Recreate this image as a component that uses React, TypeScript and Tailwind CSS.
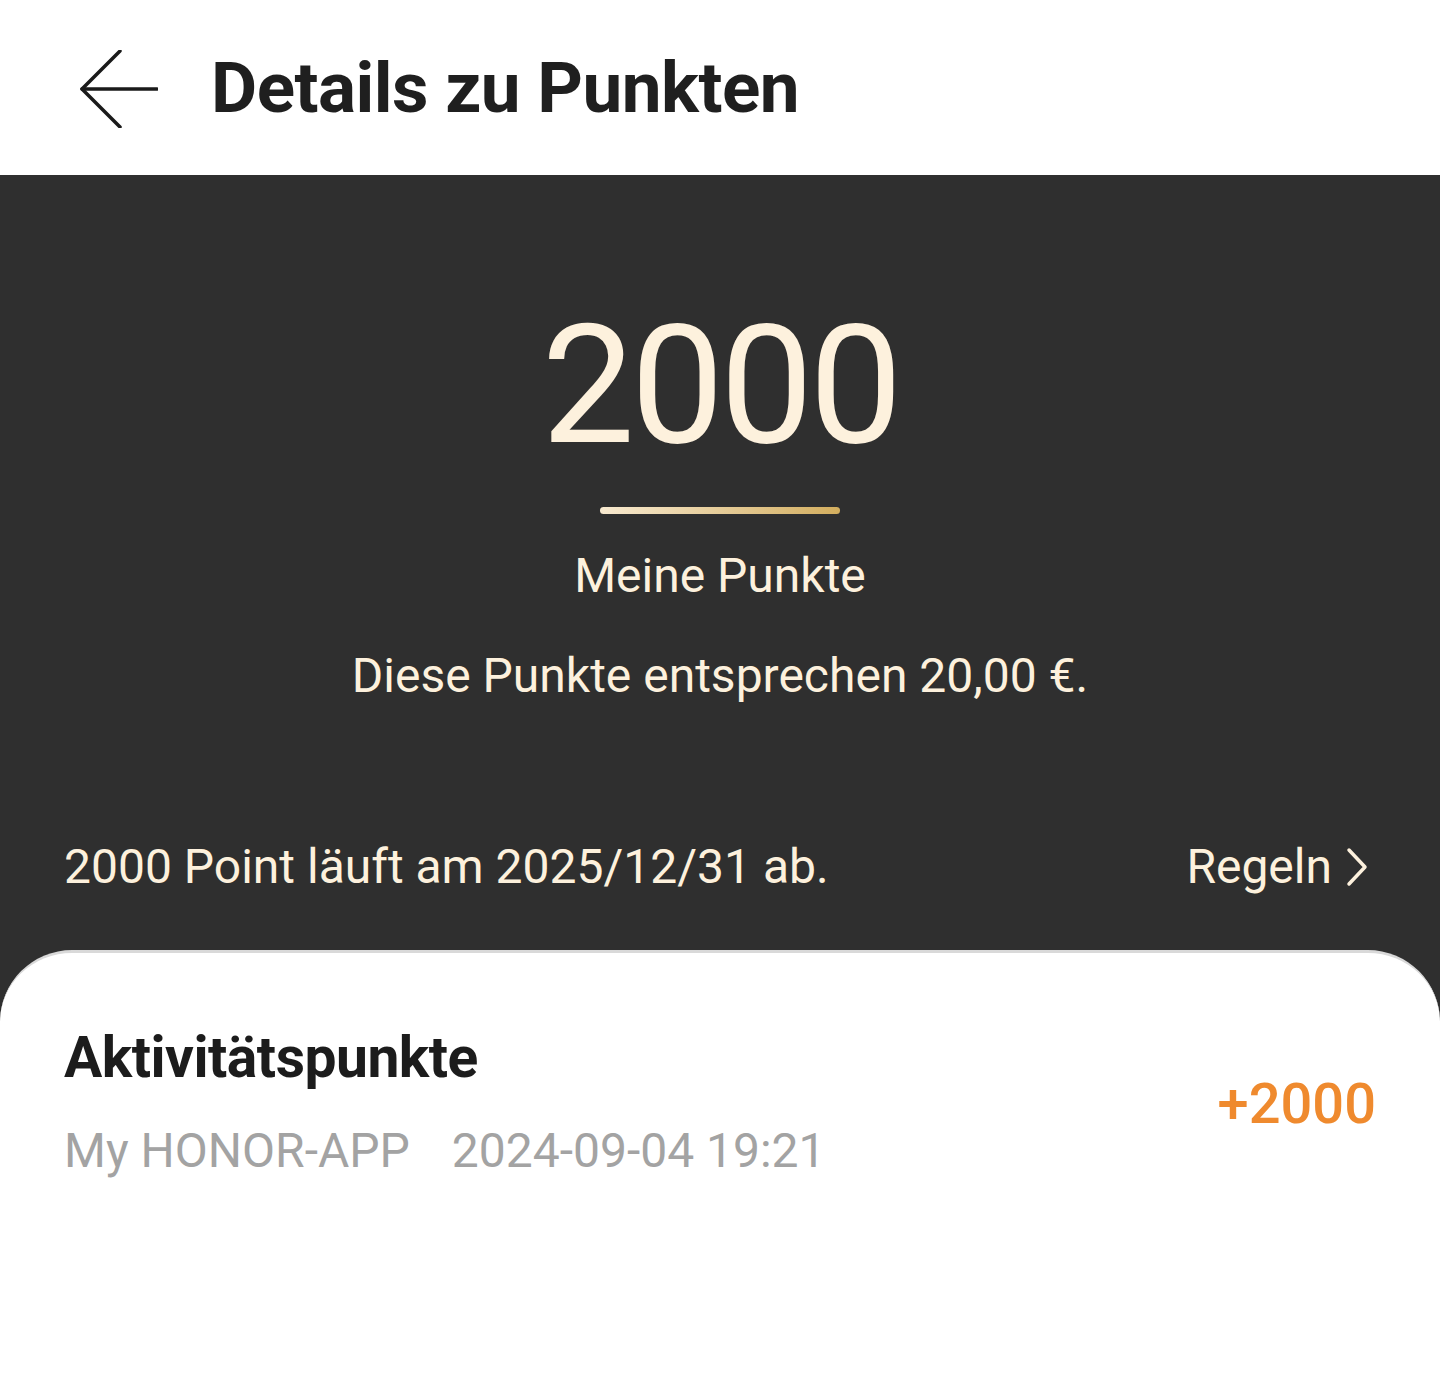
import React from "react";

export default function App() {
  return (
    <div className="w-[1440px] h-[1400px] bg-white overflow-hidden" style={{ fontFamily: "Roboto, 'Noto Sans', sans-serif" }}>
      <div className="h-[175px] flex items-center pl-[80px]">
        <svg width="78" height="78" viewBox="0 0 78 78" fill="none" stroke="#1a1a1a" strokeWidth="3.5" strokeLinecap="round" strokeLinejoin="round" className="mt-[2px]">
          <path d="M77 39 H2" />
          <path d="M40 1 L2 39 L40 77" />
        </svg>
        <h1 className="ml-[53px] text-[71px] font-bold text-[#1f1f1f] tracking-[-0.5px] leading-none">Details zu Punkten</h1>
      </div>
      <div className="bg-[#2f2f2f] h-[1225px] flex flex-col">
        <div className="flex flex-col items-center pt-[128px]">
          <div className="text-[166px] leading-none text-[#fdf1dd] tracking-[-4px]">2000</div>
          <div className="mt-[38px] w-[240px] h-[7px] rounded-full bg-gradient-to-r from-[#f8ead0] to-[#d3ae5e]" />
          <div className="mt-[38px] text-[48px] leading-none text-[#fdf1dd]">Meine Punkte</div>
          <div className="mt-[52px] text-[48px] leading-none text-[#fdf1dd]">Diese Punkte entsprechen 20,00 €.</div>
        </div>
        <div className="mt-[143px] flex items-center justify-between pl-[64px] pr-[72px]">
          <div className="text-[48px] leading-none text-[#fdf1dd]">2000 Point läuft am 2025/12/31 ab.</div>
          <div className="flex items-center text-[48px] leading-none text-[#fdf1dd]">
            <span>Regeln</span>
            <svg width="22" height="40" viewBox="0 0 22 40" fill="none" stroke="#fdf1dd" strokeWidth="3.5" strokeLinecap="round" strokeLinejoin="round" className="ml-[14px]">
              <path d="M3 3 L19 20 L3 37" />
            </svg>
          </div>
        </div>
        <div className="mt-[59px] flex-1 bg-white rounded-t-[72px] border-t-[3px] border-[#d9d9d9] pt-[76px] pl-[64px] pr-[64px] flex justify-between self-stretch">
          <div className="flex flex-col self-start">
            <div className="text-[57px] font-bold leading-none text-[#1c1c1c] tracking-[-0.5px]">Aktivitätspunkte</div>
            <div className="mt-[41px] text-[48px] leading-none text-[#a3a3a3] flex gap-[42px]">
              <span>My HONOR-APP</span>
              <span>2024-09-04 19:21</span>
            </div>
          </div>
          <div className="self-start mt-[47px] text-[56px] font-medium leading-none text-[#ef8a2e]">+2000</div>
        </div>
      </div>
    </div>
  );
}
